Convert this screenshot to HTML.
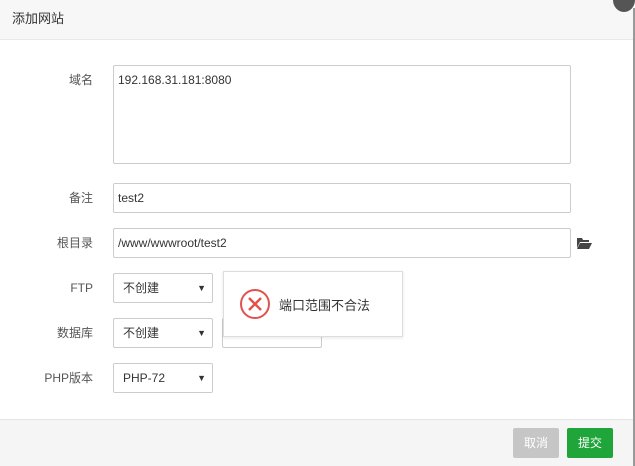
<!DOCTYPE html>
<html><head><meta charset="utf-8"><style>
body{margin:0;width:635px;height:466px;overflow:hidden;background:#fff;font-family:"Liberation Sans","Noto Sans CJK SC",sans-serif;font-size:12px;color:#555;position:relative}
.a{position:absolute;box-sizing:border-box}
.hd{left:0;top:0;width:633px;height:40px;background:#f7f7f7;border-bottom:1px solid #e8e8e8;padding:10px 0 0 12px;font-size:13px;color:#333;line-height:18px}
.lb{width:93px;text-align:right;color:#555;line-height:14px}
.in{border:1px solid #ccc;border-radius:2px;background:#fff;padding:0 6px;color:#333;font-size:12px;line-height:28px}
.sel:after{content:"▼";position:absolute;right:6px;top:0;font-size:9px;color:#333}
.ft{left:0;top:419px;width:633px;height:47px;background:#f5f5f5;border-top:1px solid #e5e5e5}
.btn{top:428px;width:46px;height:30px;border-radius:2px;color:#fff;text-align:center;line-height:30px;font-size:12px}
</style></head><body>
<div class="a hd">添加网站</div>
<div class="a" style="left:633px;top:8px;width:2px;height:458px;background:#999"></div>
<div class="a" style="left:613px;top:-12px;width:22px;height:24px;border-radius:50%;background:#555"></div>
<div class="a lb" style="top:73px">域名</div>
<div class="a in" style="left:113px;top:65px;width:458px;height:99px;padding:2px 4px;line-height:24px">192.168.31.181:8080</div>
<div class="a lb" style="top:191px">备注</div>
<div class="a in" style="left:113px;top:183px;width:458px;height:30px;padding-left:4px">test2</div>
<div class="a lb" style="top:236px">根目录</div>
<div class="a in" style="left:113px;top:228px;width:458px;height:30px;padding-left:4px">/www/wwwroot/test2</div>
<svg class="a" style="left:576px;top:237px" width="16" height="12" viewBox="0 0 16 12"><path d="M1 1h5l1 2h6v2H4L1 11z" fill="#444"/><path d="M4 6h12l-3 6H1z" fill="#444"/></svg>
<div class="a lb" style="top:281px">FTP</div>
<div class="a in sel" style="left:113px;top:273px;width:100px;height:30px;padding-left:9px">不创建</div>
<div class="a lb" style="top:326px">数据库</div>
<div class="a in sel" style="left:113px;top:318px;width:100px;height:30px;padding-left:9px">不创建</div>
<div class="a in" style="left:222px;top:318px;width:100px;height:30px"></div>
<div class="a lb" style="top:371px">PHP版本</div>
<div class="a in sel" style="left:113px;top:363px;width:100px;height:30px;padding-left:9px">PHP-72</div>
<div class="a" style="left:223px;top:271px;width:180px;height:66px;background:#fff;border:1px solid #ddd;box-shadow:0 1px 3px rgba(0,0,0,.1)"></div>
<svg class="a" style="left:239px;top:288px" width="32" height="32" viewBox="0 0 32 32"><circle cx="16" cy="16" r="14" fill="none" stroke="#e0534d" stroke-width="2"/><path d="M10 10L22 22M22 10L10 22" stroke="#e0534d" stroke-width="2.5"/></svg>
<div class="a" style="left:279px;top:295px;font-size:13px;color:#333">端口范围不合法</div>
<div class="a ft"></div>
<div class="a btn" style="left:513px;background:#c6c6c6">取消</div>
<div class="a btn" style="left:567px;background:#20a53a">提交</div>
</body></html>
